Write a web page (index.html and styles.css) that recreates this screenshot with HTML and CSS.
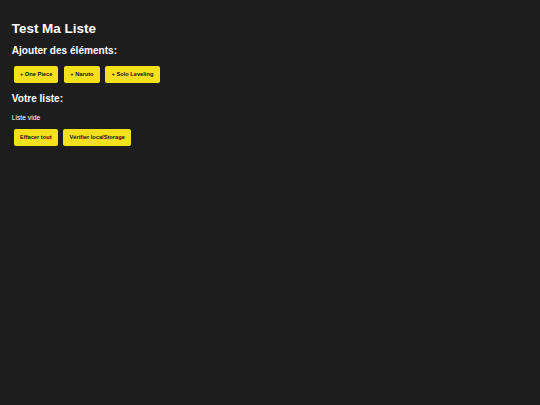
FILE: index.html
```html
<!DOCTYPE html>
<html lang="fr">
<head>
<meta charset="utf-8">
<title>Test Ma Liste</title>
<link rel="stylesheet" href="styles.css">
</head>
<body>
<h1 class="title">Test Ma Liste</h1>
<h2 class="section">Ajouter des éléments:</h2>
<div class="actions">
  <button class="btn">+ One Piece</button>
  <button class="btn">+ Naruto</button>
  <button class="btn">+ Solo Leveling</button>
</div>
<h2 class="section">Votre liste:</h2>
<p class="list">Liste vide</p>
<div class="actions">
  <button class="btn">Effacer tout</button>
  <button class="btn">Vérifier localStorage</button>
</div>
</body>
</html>
```

FILE: styles.css
```css
html, body {
  margin: 0;
  background: #1d1d1d;
}
body {
  padding: 11.76px;
  font-family: "Liberation Sans", Arial, sans-serif;
  font-size: 6.72px;
  color: #ffffff;
}
.title {
  font-size: 13.44px;
  font-weight: bold;
  margin: 9px 0;
}
.section {
  font-size: 10.08px;
  font-weight: bold;
  margin: 8.4px 0;
}
.section + .actions {
  margin-top: 1px;
}
.list {
  margin: 9.4px 0 6.5px;
  font-size: 6.72px;
}
.actions {
  display: flex;
  gap: 1.6px;
}
.btn {
  margin: 2.1px;
  padding: 5px 6.1px;
  border: none;
  border-radius: 2px;
  background: #f5e11b;
  color: #111111;
  font-family: "Liberation Sans", Arial, sans-serif;
  font-weight: bold;
  font-size: 5.7px;
  line-height: 1.15;
}
```
